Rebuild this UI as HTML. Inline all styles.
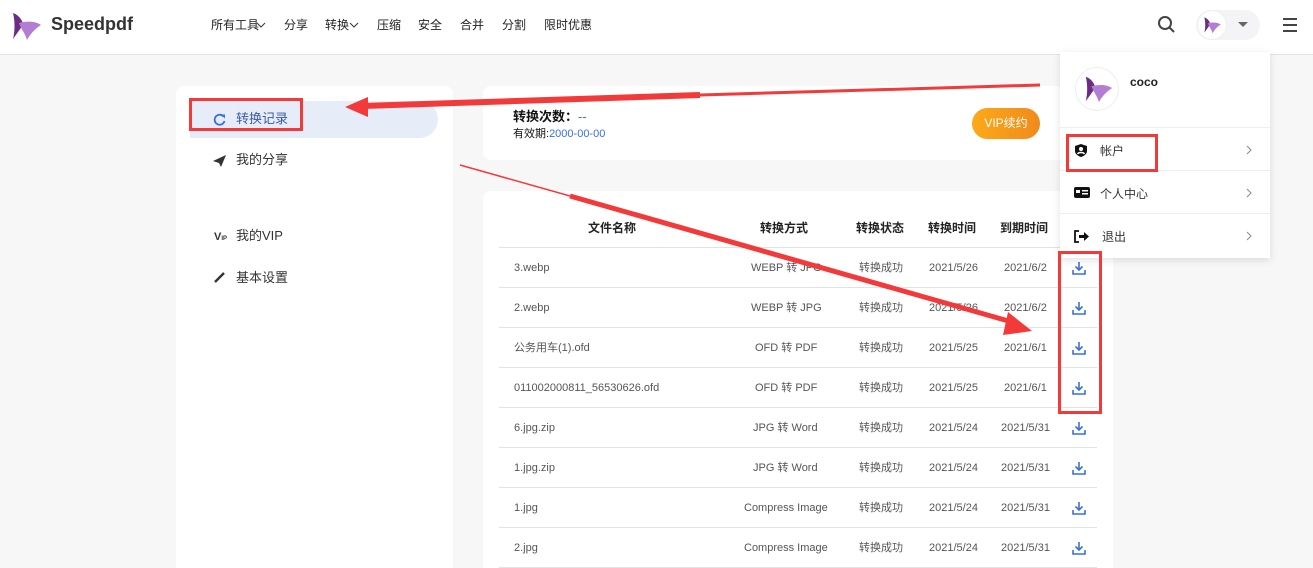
<!DOCTYPE html>
<html><head><meta charset="utf-8"><style>
*{margin:0;padding:0;box-sizing:border-box}
html,body{width:1313px;height:568px;overflow:hidden}
body{background:#f7f7f7;font-family:"Liberation Sans","Noto Sans CJK SC",sans-serif;position:relative;color:#333}
.a{position:absolute}
.hdr{left:0;top:0;width:1313px;height:55px;background:#fff;border-bottom:1px solid #e3e3e3}
.nav{font-size:12px;color:#222;top:17px;line-height:16px}
.card{background:#fff;border-radius:8px}
.side{font-size:13px;color:#333;line-height:16px}
.row{position:absolute;left:499px;width:598px;height:40px;border-bottom:1px solid #e2e2e2;font-size:11px;color:#555}
.row span{position:absolute;top:0;line-height:40px}
.dl{position:absolute;left:573px;top:13px}
.mi{position:absolute;left:0;width:210px;height:43px;border-top:1px solid #eee;font-size:12px;color:#333}
.mi span{line-height:16px}
.redb{position:absolute;border:3px solid #f23a3a}
</style></head><body>
<div class="a hdr"></div>
<svg class="a" style="left:9px;top:11px" width="34" height="30" viewBox="0 0 34 30"><path d="M4 2 C10 4 14 10 14 14 L4 28 C6 20 6 10 4 2Z" fill="#6b2c84"/><path d="M10 12 C18 10 26 10 32 14 C26 18 22 22 18 29 C16 22 12 18 10 12Z" fill="#b27ed3"/></svg>
<div class="a" style="left:51px;top:14px;font-size:18px;font-weight:bold;color:#333">Speedpdf</div>
<div class="a nav" style="left:211px">所有工具</div>
<svg class="a" style="left:256px;top:22px" width="10" height="6"><path d="M1 1l4 4 4-4" stroke="#333" fill="none"/></svg>
<div class="a nav" style="left:284px">分享</div>
<div class="a nav" style="left:325px">转换</div>
<svg class="a" style="left:349px;top:22px" width="10" height="6"><path d="M1 1l4 4 4-4" stroke="#333" fill="none"/></svg>
<div class="a nav" style="left:377px">压缩</div>
<div class="a nav" style="left:418px">安全</div>
<div class="a nav" style="left:460px">合并</div>
<div class="a nav" style="left:502px">分割</div>
<div class="a nav" style="left:544px">限时优惠</div>
<svg class="a" style="left:1157px;top:15px" width="20" height="20"><circle cx="8" cy="8" r="6" stroke="#444" stroke-width="2" fill="none"/><path d="M12.5 12.5L17 17" stroke="#444" stroke-width="2"/></svg>
<div class="a" style="left:1196px;top:10px;width:64px;height:30px;border-radius:15px;background:#f4f4f6"></div>
<div class="a" style="left:1197px;top:10px;width:30px;height:30px;border-radius:50%;background:#fff;border:1px solid #eee"></div>
<svg class="a" style="left:1202px;top:15px" width="20" height="20" viewBox="0 0 34 30"><path d="M4 2 C10 4 14 10 14 14 L4 28 C6 20 6 10 4 2Z" fill="#6b2c84"/><path d="M10 12 C18 10 26 10 32 14 C26 18 22 22 18 29 C16 22 12 18 10 12Z" fill="#b27ed3"/></svg>
<div class="a" style="left:1238px;top:22px;border:5px solid transparent;border-top:5px solid #666"></div>
<div class="a" style="left:1283px;top:18px;width:14px;height:2px;background:#444;box-shadow:0 6px 0 #444,0 12px 0 #444"></div>

<div class="a card" style="left:176px;top:86px;width:277px;height:500px"></div>
<div class="a" style="left:190px;top:101px;width:248px;height:37px;border-radius:0 19px 19px 0;background:#e6edf8"></div>
<svg class="a" style="left:213px;top:113px" width="13" height="13"><path d="M10.5 3.5A5 5 0 1 0 11.5 8" stroke="#3a6fd8" stroke-width="1.8" fill="none"/><path d="M8 1.5h4v4z" fill="#3a6fd8"/></svg>
<div class="a side" style="left:236px;top:111px;color:#3a5aa8">转换记录</div>
<svg class="a" style="left:213px;top:155px" width="13" height="12"><path d="M0 6L13 0 8 12 6 8Z" fill="#333"/></svg>
<div class="a side" style="left:236px;top:152px">我的分享</div>
<div class="a" style="left:214px;top:231px;font-size:11px;font-weight:bold;line-height:12px">V<span style="font-size:6px">IP</span></div>
<div class="a side" style="left:236px;top:228px">我的VIP</div>
<svg class="a" style="left:213px;top:271px" width="13" height="13"><path d="M2 11L11 2" stroke="#333" stroke-width="2.4"/></svg>
<div class="a side" style="left:236px;top:270px">基本设置</div>

<div class="a card" style="left:483px;top:86px;width:600px;height:74px"></div>
<div class="a" style="left:513px;top:106px;font-size:13px;font-weight:bold;color:#111">转换次数：<span style="color:#3a6fd8;font-weight:normal">--</span></div>
<div class="a" style="left:513px;top:125px;font-size:11px;color:#111">有效期:<span style="color:#3a6fd8">2000-00-00</span></div>
<div class="a" style="left:972px;top:108px;width:68px;height:31px;border-radius:16px;background:linear-gradient(90deg,#fbaa18,#f08a1c);color:#fff;font-size:12px;text-align:center;line-height:31px">VIP续约</div>

<div class="a card" style="left:483px;top:191px;width:630px;height:400px"></div>
<div class="row" style="top:208px;font-size:12px;font-weight:bold;color:#222"><span style="left:89px">文件名称</span><span style="left:261px">转换方式</span><span style="left:357px">转换状态</span><span style="left:429px">转换时间</span><span style="left:501px">到期时间</span></div>

<div class="row" style="top:248px"><span style="left:15px">3.webp</span><span style="left:252px">WEBP 转 JPG</span><span style="left:360px">转换成功</span><span style="left:430px">2021/5/26</span><span style="left:505px">2021/6/2</span><svg class="dl" width="14" height="14"><path d="M7 1v8M3.5 5.5L7 9l3.5-3.5M1 9v4h12V9" stroke="#3a6fd8" stroke-width="1.6" fill="none"/></svg></div>
<div class="row" style="top:288px"><span style="left:15px">2.webp</span><span style="left:252px">WEBP 转 JPG</span><span style="left:360px">转换成功</span><span style="left:430px">2021/5/26</span><span style="left:505px">2021/6/2</span><svg class="dl" width="14" height="14"><path d="M7 1v8M3.5 5.5L7 9l3.5-3.5M1 9v4h12V9" stroke="#3a6fd8" stroke-width="1.6" fill="none"/></svg></div>
<div class="row" style="top:328px"><span style="left:15px">公务用车(1).ofd</span><span style="left:256px">OFD 转 PDF</span><span style="left:360px">转换成功</span><span style="left:430px">2021/5/25</span><span style="left:505px">2021/6/1</span><svg class="dl" width="14" height="14"><path d="M7 1v8M3.5 5.5L7 9l3.5-3.5M1 9v4h12V9" stroke="#3a6fd8" stroke-width="1.6" fill="none"/></svg></div>
<div class="row" style="top:368px"><span style="left:15px">011002000811_56530626.ofd</span><span style="left:256px">OFD 转 PDF</span><span style="left:360px">转换成功</span><span style="left:430px">2021/5/25</span><span style="left:505px">2021/6/1</span><svg class="dl" width="14" height="14"><path d="M7 1v8M3.5 5.5L7 9l3.5-3.5M1 9v4h12V9" stroke="#3a6fd8" stroke-width="1.6" fill="none"/></svg></div>
<div class="row" style="top:408px"><span style="left:15px">6.jpg.zip</span><span style="left:254px">JPG 转 Word</span><span style="left:360px">转换成功</span><span style="left:430px">2021/5/24</span><span style="left:502px">2021/5/31</span><svg class="dl" width="14" height="14"><path d="M7 1v8M3.5 5.5L7 9l3.5-3.5M1 9v4h12V9" stroke="#3a6fd8" stroke-width="1.6" fill="none"/></svg></div>
<div class="row" style="top:448px"><span style="left:15px">1.jpg.zip</span><span style="left:254px">JPG 转 Word</span><span style="left:360px">转换成功</span><span style="left:430px">2021/5/24</span><span style="left:502px">2021/5/31</span><svg class="dl" width="14" height="14"><path d="M7 1v8M3.5 5.5L7 9l3.5-3.5M1 9v4h12V9" stroke="#3a6fd8" stroke-width="1.6" fill="none"/></svg></div>
<div class="row" style="top:488px"><span style="left:15px">1.jpg</span><span style="left:245px">Compress Image</span><span style="left:360px">转换成功</span><span style="left:430px">2021/5/24</span><span style="left:502px">2021/5/31</span><svg class="dl" width="14" height="14"><path d="M7 1v8M3.5 5.5L7 9l3.5-3.5M1 9v4h12V9" stroke="#3a6fd8" stroke-width="1.6" fill="none"/></svg></div>
<div class="row" style="top:528px"><span style="left:15px">2.jpg</span><span style="left:245px">Compress Image</span><span style="left:360px">转换成功</span><span style="left:430px">2021/5/24</span><span style="left:502px">2021/5/31</span><svg class="dl" width="14" height="14"><path d="M7 1v8M3.5 5.5L7 9l3.5-3.5M1 9v4h12V9" stroke="#3a6fd8" stroke-width="1.6" fill="none"/></svg></div>

<div class="a" style="left:1060px;top:52px;width:210px;height:206px;background:#fff;box-shadow:0 2px 8px rgba(0,0,0,.12)">
 <div class="a" style="left:15px;top:15px;width:44px;height:44px;border-radius:50%;border:1px solid #eee"></div>
 <svg class="a" style="left:22px;top:22px" width="32" height="30" viewBox="0 0 34 30"><path d="M4 2 C10 4 14 10 14 14 L4 28 C6 20 6 10 4 2Z" fill="#6b2c84"/><path d="M10 12 C18 10 26 10 32 14 C26 18 22 22 18 29 C16 22 12 18 10 12Z" fill="#b27ed3"/></svg>
 <div class="a" style="left:70px;top:23px;font-size:12px;font-weight:bold;color:#222">coco</div>
 <div class="mi" style="top:75px"><svg class="a" style="left:15px;top:16px" width="12" height="13"><path d="M6 0L12 2v5c0 3-3 5-6 6C3 12 0 10 0 7V2Z" fill="#111"/><circle cx="6" cy="5" r="2" fill="#fff"/><path d="M2.5 10c1-2 6-2 7 0" stroke="#fff" stroke-width="1.5" fill="none"/></svg><span class="a" style="left:40px;top:15px">帐户</span><svg class="a" style="left:186px;top:17px" width="6" height="10"><path d="M1 1l4 4-4 4" stroke="#888" fill="none"/></svg></div>
 <div class="mi" style="top:118px"><svg class="a" style="left:14px;top:16px" width="16" height="11"><rect width="16" height="11" rx="2" fill="#111"/><rect x="2" y="3" width="4" height="3" fill="#fff"/><rect x="8" y="3" width="6" height="1.5" fill="#fff"/><rect x="8" y="6" width="6" height="1.5" fill="#fff"/></svg><span class="a" style="left:40px;top:15px">个人中心</span><svg class="a" style="left:186px;top:17px" width="6" height="10"><path d="M1 1l4 4-4 4" stroke="#888" fill="none"/></svg></div>
 <div class="mi" style="top:161px"><svg class="a" style="left:14px;top:16px" width="15" height="13"><path d="M5 1H1v11h4" stroke="#111" stroke-width="1.8" fill="none"/><path d="M5 5h5V2l5 4.5-5 4.5V8H5Z" fill="#111"/></svg><span class="a" style="left:42px;top:15px">退出</span><svg class="a" style="left:186px;top:17px" width="6" height="10"><path d="M1 1l4 4-4 4" stroke="#888" fill="none"/></svg></div>
</div>

<div class="redb" style="left:189px;top:98px;width:114px;height:33px"></div>
<div class="redb" style="left:1066px;top:134px;width:92px;height:38px"></div>
<div class="redb" style="left:1058px;top:251px;width:44px;height:163px"></div>
<svg class="a" style="left:0;top:0" width="1313" height="568">
<path d="M1040 85 L700 95" stroke="#f23a3a" stroke-width="3"/>
<path d="M700 95 L362 106" stroke="#f23a3a" stroke-width="6"/>
<path d="M345 107 L368 97 L368 117Z" fill="#f23a3a"/>
<path d="M460 165 L570 196" stroke="#f23a3a" stroke-width="1.5"/>
<path d="M570 196 L1012 322" stroke="#f23a3a" stroke-width="5"/>
<path d="M1032 331 L1008 312 L1003 335Z" fill="#f23a3a"/>
</svg>
</body></html>
